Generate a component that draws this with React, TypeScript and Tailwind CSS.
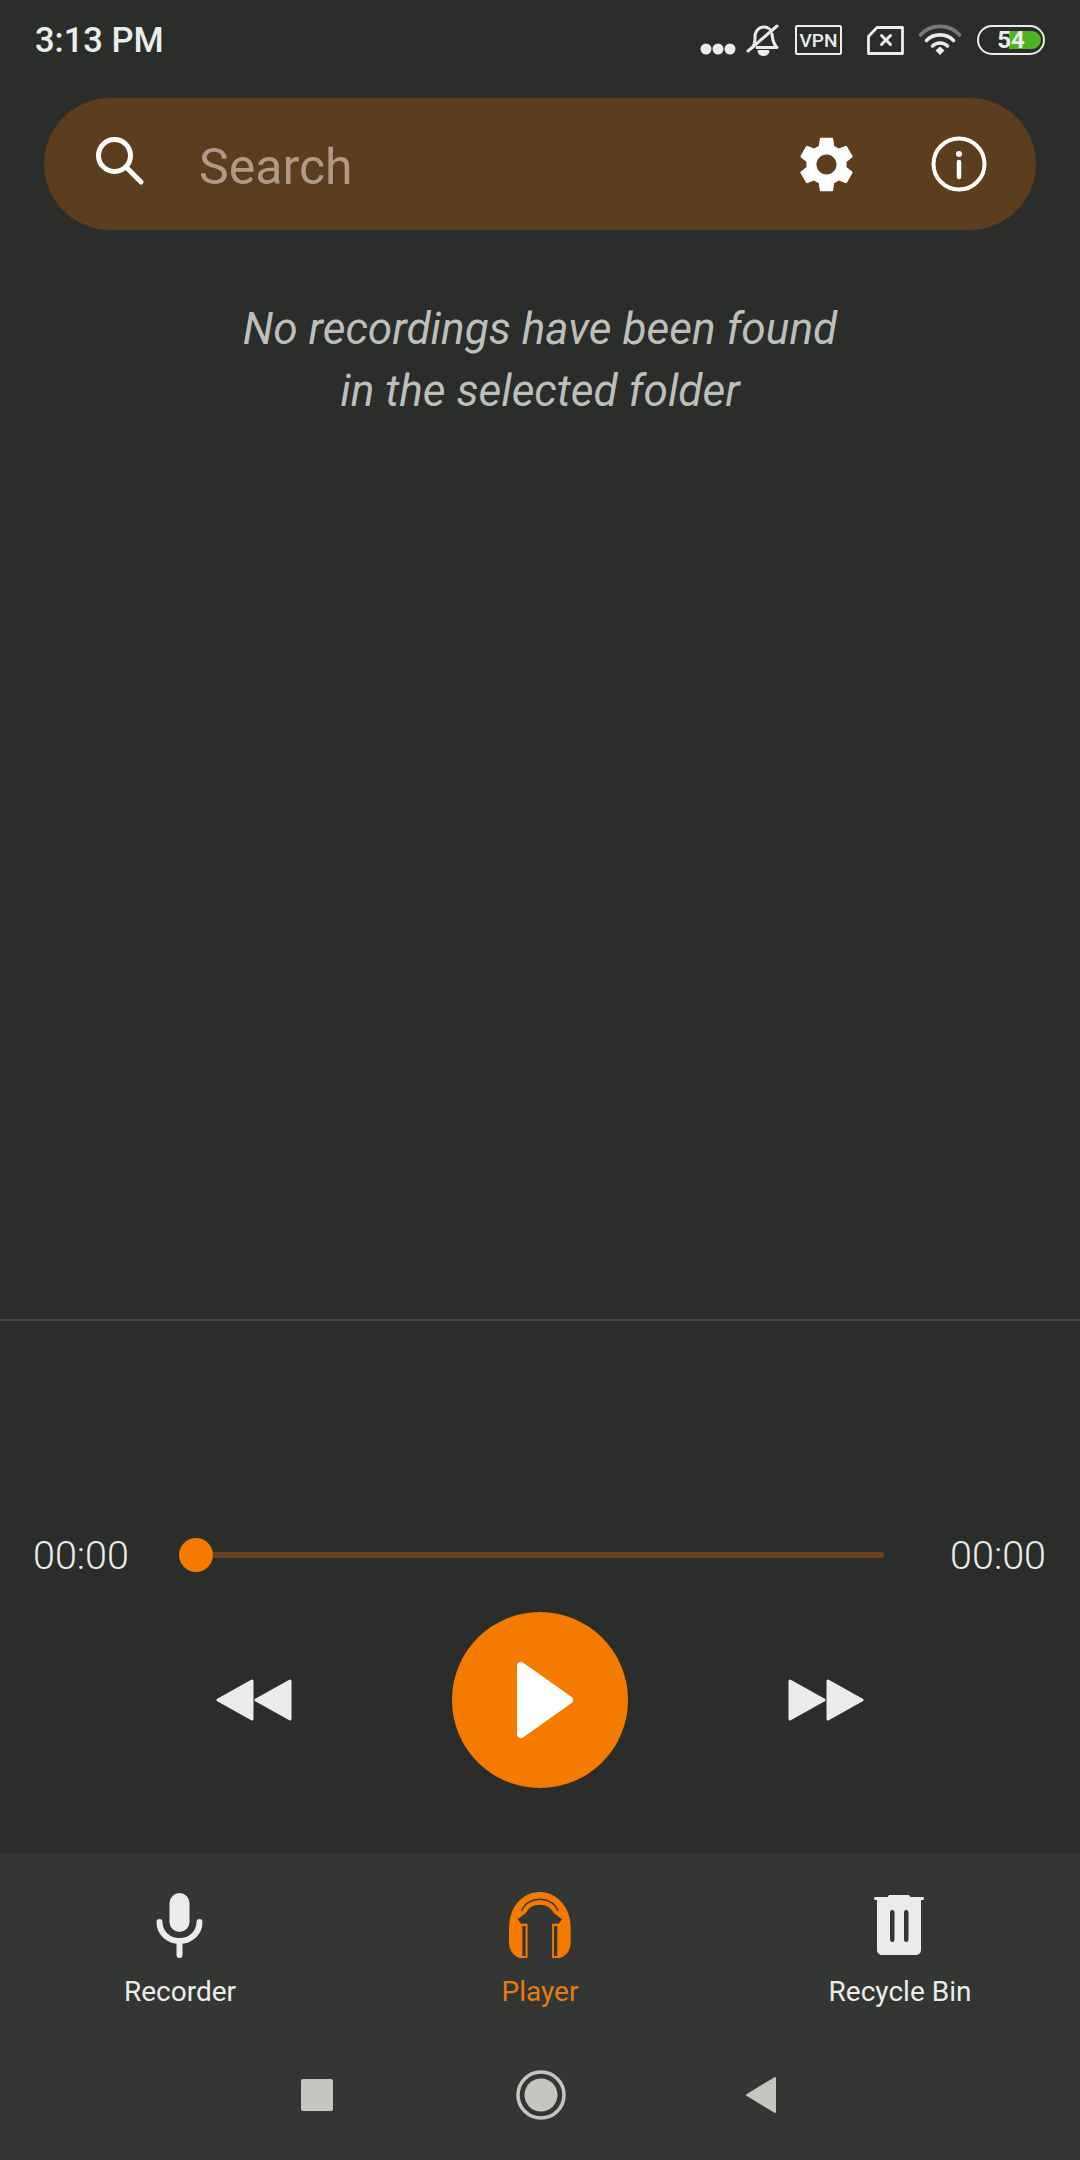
import React from 'react';

const roboto = "font-['Roboto',sans-serif]";

const StatusIcons = () => (
  <div className="flex items-center">
    <svg width="38" height="32" viewBox="0 0 38 32" className="mr-[9px]">
      <circle cx="7" cy="25" r="5.500" fill="#ebedeb" />
      <circle cx="19" cy="25" r="5.500" fill="#ebedeb" />
      <circle cx="31" cy="25" r="5.500" fill="#ebedeb" />
    </svg>
    <svg width="34" height="34" viewBox="0 0 34 34" fill="none" stroke="#ebedeb" strokeWidth="3" strokeLinecap="round" strokeLinejoin="round" className="mr-[15px]">
      <path d="M7 24c2-3 2-6 2-10 0-6 4-10 9-10 2 0 4 .6 5.500 2" />
      <path d="M26 11c.6 5 .6 9 5 13.500H11" />
      <path d="M13 28.500h9c-.8 2-2.400 3-4.500 3s-3.700-1-4.500-3z" fill="#ebedeb" />
      <path d="M2 28 31 3" />
    </svg>
    <div className={`mr-[25px] flex h-[30px] w-[47px] items-center justify-center rounded-[2px] border-2 border-[#ebedeb] text-[19px] leading-none font-medium text-[#ebedeb] ${roboto}`}>
      VPN
    </div>
    <svg width="37" height="29" viewBox="0 0 37 29" fill="none" stroke="#ebedeb" strokeWidth="2.800" strokeLinejoin="round" className="mr-[14px]">
      <path d="M10 1.500h25.500v26h-34V10.500z" />
      <path d="M14.500 9.500 23.500 18.500M23.500 9.500 14.500 18.500" strokeWidth="3" strokeLinecap="round" />
    </svg>
    <svg width="44" height="32" viewBox="0 0 44 32" fill="none" strokeLinecap="round" className="mr-[15px]">
      <path d="M2.500 11C12.500 -0.500 31.500 -0.500 41.500 11" stroke="#777977" strokeWidth="3.600" />
      <path d="M8.500 16.500C15.500 9 28.500 9 35.500 16.500" stroke="#ebedeb" strokeWidth="3.600" />
      <path d="M14.500 22C18.500 18 25.500 18 29.500 22" stroke="#ebedeb" strokeWidth="3.600" />
      <path d="M17.500 26.500 22 22.500 26.500 26.500 22 31z" fill="#ebedeb" />
    </svg>
    <div className={`relative flex h-[30px] w-[68px] items-center justify-center rounded-full border-2 border-[#ebedeb] ${roboto}`}>
      <div className="absolute left-[30px] top-[4px] h-[18px] w-[32px] rounded-r-full bg-[#4fb224]" />
      <span className="relative text-[24px] leading-none font-bold text-[#ebedeb]">54</span>
    </div>
  </div>
);

const SearchBar = () => (
  <div className="mx-[44px] mt-[18px] flex h-[132px] items-center rounded-full bg-[#5c3d1e] pl-[51px] pr-[49px]">
    <svg width="50" height="50" viewBox="0 0 50 50" fill="none" stroke="#fff" strokeLinecap="round" className="mb-[6px] mr-[54px] shrink-0">
      <circle cx="19.500" cy="19.500" r="16" strokeWidth="5" />
      <path d="M31 31 46 46" strokeWidth="5" />
    </svg>
    <span className={`flex-1 pt-[5px] text-[50px] leading-none text-[#ae9a87] ${roboto}`}>Search</span>
    <svg width="67" height="67" viewBox="0 0 24 24" fill="#fff" className="mr-[71px] shrink-0">
      <path d="M19.140 12.940c.04-.3.06-.61.06-.94 0-.32-.02-.64-.07-.94l2.030-1.580c.18-.14.23-.41.12-.61l-1.920-3.320c-.12-.22-.37-.29-.59-.22l-2.390.96c-.5-.38-1.030-.7-1.620-.94l-.36-2.540c-.04-.24-.24-.41-.48-.41h-3.840c-.24 0-.43.17-.47.41l-.36 2.540c-.59.24-1.130.57-1.620.94l-2.390-.96c-.22-.08-.47 0-.59.22L2.740 8.870c-.12.21-.08.47.12.61l2.030 1.580c-.05.3-.09.63-.09.94s.02.64.07.94l-2.030 1.580c-.18.14-.23.41-.12.61l1.920 3.320c.12.22.37.29.59.22l2.390-.96c.5.38 1.030.7 1.620.94l.36 2.540c.05.24.24.41.48.41h3.840c.24 0 .44-.17.47-.41l.36-2.540c.59-.24 1.130-.56 1.620-.94l2.390.96c.22.08.47 0 .59-.22l1.920-3.320c.12-.22.07-.47-.12-.61l-2.010-1.580zM12 15.600c-1.980 0-3.600-1.620-3.600-3.600s1.620-3.600 3.600-3.600 3.600 1.620 3.600 3.600-1.620 3.600-3.600 3.600z" />
    </svg>
    <svg width="56" height="56" viewBox="0 0 56 56" fill="none" stroke="#fff" strokeLinecap="round" className="shrink-0">
      <circle cx="28" cy="28" r="25.500" strokeWidth="4" />
      <path d="M28 26v15" strokeWidth="4.500" />
      <circle cx="28" cy="18" r="3" fill="#fff" stroke="none" />
    </svg>
  </div>
);

const Rewind = () => (
  <svg width="76" height="44" viewBox="0 0 76 44" fill="#ebedeb" stroke="#ebedeb" strokeWidth="3" strokeLinejoin="round">
    <path d="M2 22 36 3v38z" />
    <path d="M40 22 74 3v38z" />
  </svg>
);

const Forward = () => (
  <svg width="76" height="44" viewBox="0 0 76 44" fill="#ebedeb" stroke="#ebedeb" strokeWidth="3" strokeLinejoin="round">
    <path d="M74 22 40 3v38z" />
    <path d="M36 22 2 3v38z" />
  </svg>
);

const Player = () => (
  <div className="flex flex-1 flex-col justify-end border-t-2 border-[#414341] pb-[66px]">
    <div className={`mb-[40px] flex h-[34px] items-center pl-[33px] pr-[34px] text-[39.500px] leading-none font-[350] text-[#ebedeb] ${roboto}`}>
      <span className="w-[146px] pt-[2px]">00:00</span>
      <div className="flex w-[705px] items-center">
        <div className="h-[34px] w-[34px] rounded-full bg-[#f47b00]" />
        <div className="h-[6px] flex-1 rounded-r-full bg-[#6a421e]" />
      </div>
      <span className="ml-auto pt-[2px]">00:00</span>
    </div>
    <div className="flex items-center justify-center gap-[160px]">
      <Rewind />
      <div className="flex h-[176px] w-[176px] items-center justify-center rounded-full bg-[#f47b00]">
        <svg width="60" height="80" viewBox="0 0 60 80" fill="#fff" stroke="#fff" strokeWidth="8" strokeLinejoin="round" className="ml-[10px]">
          <path d="M6 6 54 40 6 74z" />
        </svg>
      </div>
      <Forward />
    </div>
  </div>
);

const Tab = ({ label, active, children }: { label: string; active?: boolean; children: React.ReactNode }) => (
  <div className="flex flex-col items-center">
    <div className="flex h-[70px] items-center justify-center">{children}</div>
    <span className={`mt-[14px] text-[28px] leading-[36px] ${roboto} ${active ? 'text-[#e67a14]' : 'text-[#ebedeb]'}`}>{label}</span>
  </div>
);

const BottomNav = () => (
  <div className="h-[306px] bg-[#343634] pt-[36px]">
    <div className="grid grid-cols-3">
      <Tab label="Recorder">
        <svg width="48" height="66" viewBox="0 0 48 66" fill="none" stroke="#ebedeb" strokeLinecap="round">
          <rect x="13.500" y="1" width="20" height="39" rx="10" fill="#ebedeb" stroke="none" />
          <path d="M3.500 30c0 11 9 19 20 19s20-8 20-19" strokeWidth="6" />
          <path d="M23.500 50v13" strokeWidth="6" />
        </svg>
      </Tab>
      <Tab label="Player" active>
        <svg width="62" height="67" viewBox="40 40 186 201">
          <path d="M40 150C40 85 80 40 132 40S225 85 225 150V192C225 215 210 235 190 238H75C55 235 40 215 40 192z" fill="#f47b00" />
          <path d="M132 78C112 78 98 88 90 104L66 122 76 135H95V241H170V135H189L199 122 175 104C167 88 152 78 132 78z" fill="#343634" />
          <path d="M78 97C95 50 170 50 187 97" fill="none" stroke="#343634" strokeWidth="4" />
          <rect x="76" y="135" width="19" height="103" rx="5" fill="#f47b00" />
          <rect x="170" y="135" width="19" height="103" rx="5" fill="#f47b00" />
          <rect x="80" y="142" width="10" height="90" fill="#343634" />
          <rect x="175" y="142" width="10" height="90" fill="#343634" />
        </svg>
      </Tab>
      <Tab label="Recycle Bin">
        <svg width="52" height="60" viewBox="0 0 52 60" fill="#ebedeb" className="mr-[2px]">
          <path d="M15 1.500C15 .7 16 0 17 0h18c1 0 2 .7 2 1.500V2h12.500c1 0 1.500.7 1.500 1.500S50.500 5 49.500 5H48v50c0 2.500-2 5-5 5H9c-3 0-5-2.500-5-5V5H2.500C1.500 5 1 4.300 1 3.500S1.500 2 2.500 2H15z" />
          <rect x="17" y="15" width="4.500" height="32" rx="2.200" fill="#343634" />
          <rect x="31" y="15" width="4.500" height="32" rx="2.200" fill="#343634" />
        </svg>
      </Tab>
    </div>
    <div className="mt-[65px] flex h-[40px] items-center justify-center pr-[3px]">
      <div className="h-[32px] w-[32px] rounded-[2px] bg-[#c4c6c2]" />
      <svg width="50" height="50" viewBox="0 0 50 50" className="ml-[183px] mr-[179px]">
        <circle cx="25" cy="25" r="23" fill="none" stroke="#c4c6c2" strokeWidth="3.500" />
        <circle cx="25" cy="25" r="16.500" fill="#c4c6c2" />
      </svg>
      <svg width="32" height="38" viewBox="0 0 32 38" fill="#c4c6c2" stroke="#c4c6c2" strokeWidth="2" strokeLinejoin="round">
        <path d="M2 19 30 2v34z" />
      </svg>
    </div>
  </div>
);

export default function App() {
  return (
    <div className={`flex h-[2160px] w-[1080px] flex-col bg-[#2b2d2b] ${roboto}`}>
      <div className="flex h-[80px] items-center justify-between pl-[35px] pr-[35px]">
        <span className="text-[34.500px] leading-none font-medium text-[#ebedeb]">3:13 PM</span>
        <StatusIcons />
      </div>
      <SearchBar />
      <div className="flex h-[1089px] flex-col items-center pt-[68px] text-[44.200px] leading-[62px] font-normal text-[#bdbfbb] italic">
        <span>No recordings have been found</span>
        <span>in the selected folder</span>
      </div>
      <Player />
      <BottomNav />
    </div>
  );
}
